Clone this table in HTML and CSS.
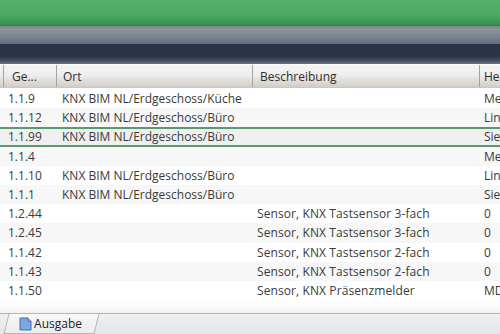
FILE: index.html
```html
<!DOCTYPE html>
<html>
<head>
<meta charset="utf-8">
<link rel="stylesheet" href="styles.css">
</head>
<body>
<div class="app">
  <div class="band-green"></div>
  <div class="band-gray"></div>
  <div class="band-navy"></div>
  <div class="grid">
    <div class="row head">
      <div class="c c0"></div>
      <div class="c c1">Ge...</div>
      <div class="c c2">Ort</div>
      <div class="c c3">Beschreibung</div>
      <div class="c c4">He</div>
    </div>
    <div class="body">
      <div class="row"><div class="c c0"></div><div class="c c1">1.1.9</div><div class="c c2">KNX BIM NL/Erdgeschoss/Küche</div><div class="c c3"></div><div class="c c4">Me</div></div>
      <div class="row alt"><div class="c c0"></div><div class="c c1">1.1.12</div><div class="c c2">KNX BIM NL/Erdgeschoss/Büro</div><div class="c c3"></div><div class="c c4">Lin</div></div>
      <div class="row sel"><div class="c c0"></div><div class="c c1">1.1.99</div><div class="c c2">KNX BIM NL/Erdgeschoss/Büro</div><div class="c c3"></div><div class="c c4">Sie</div></div>
      <div class="row alt"><div class="c c0"></div><div class="c c1">1.1.4</div><div class="c c2"></div><div class="c c3"></div><div class="c c4">Me</div></div>
      <div class="row"><div class="c c0"></div><div class="c c1">1.1.10</div><div class="c c2">KNX BIM NL/Erdgeschoss/Büro</div><div class="c c3"></div><div class="c c4">Lin</div></div>
      <div class="row alt"><div class="c c0"></div><div class="c c1">1.1.1</div><div class="c c2">KNX BIM NL/Erdgeschoss/Büro</div><div class="c c3"></div><div class="c c4">Sie</div></div>
      <div class="row"><div class="c c0"></div><div class="c c1">1.2.44</div><div class="c c2"></div><div class="c c3">Sensor, KNX Tastsensor 3-fach</div><div class="c c4">0</div></div>
      <div class="row alt"><div class="c c0"></div><div class="c c1">1.2.45</div><div class="c c2"></div><div class="c c3">Sensor, KNX Tastsensor 3-fach</div><div class="c c4">0</div></div>
      <div class="row"><div class="c c0"></div><div class="c c1">1.1.42</div><div class="c c2"></div><div class="c c3">Sensor, KNX Tastsensor 2-fach</div><div class="c c4">0</div></div>
      <div class="row alt"><div class="c c0"></div><div class="c c1">1.1.43</div><div class="c c2"></div><div class="c c3">Sensor, KNX Tastsensor 2-fach</div><div class="c c4">0</div></div>
      <div class="row"><div class="c c0"></div><div class="c c1">1.1.50</div><div class="c c2"></div><div class="c c3">Sensor, KNX Präsenzmelder</div><div class="c c4">MD</div></div>
    </div>
    <div class="filler"></div>
  </div>
  <div class="tabbar">
    <div class="tab">
      <svg class="ico" width="13" height="14" viewBox="0 0 13 14">
        <path d="M1 1h8l3 3v9H1z" fill="#7fa8dc" stroke="#3f6fb0" stroke-width="1"/>
        <path d="M9 1v3h3" fill="#c8dcf4" stroke="#3f6fb0" stroke-width="1"/>
      </svg>
      <span>Ausgabe</span>
    </div>
  </div>
</div>
</body>
</html>
```

FILE: styles.css
```css
html, body {
  margin: 0;
  padding: 0;
}
body {
  width: 500px;
  height: 334px;
  overflow: hidden;
  font-family: "Open Sans", "Noto Sans", sans-serif;
  font-size: 12px;
  color: #3a3a3a;
  background: #fff;
}
.app {
  display: flex;
  flex-direction: column;
  height: 334px;
}
.band-green {
  height: 26px;
  background: linear-gradient(#52b26a 0%, #4aa862 60%, #3c9152 92%, #2f7a44 100%);
}
.band-gray {
  height: 18px;
  background: linear-gradient(#7d838d 0%, #8e939c 20%, #7b8290 60%, #626d7e 100%);
}
.band-navy {
  height: 20px;
  background: linear-gradient(#2b3446 0%, #2a3346 60%, #46505f 85%, #6c7684 100%);
}
.grid {
  flex: 1;
  display: flex;
  flex-direction: column;
  background: #fff;
}
.row {
  display: flex;
  height: 19.2px;
  align-items: center;
  white-space: nowrap;
}
.row.alt {
  background: #f7f7f7;
}
.row.sel {
  background: #efefef;
  border-top: 2px solid #5a9870;
  border-bottom: 2px solid #5a9870;
  height: 15.2px;
}
.head {
  height: 22px;
  border-top: 1px solid #fafafa;
  background: linear-gradient(#f4f4f4 0%, #eeeeee 45%, #dcd8d4 80%, #d2cdc9 100%);
  border-bottom: 1px solid #c9c6c3;
  color: #2e2e2e;
  align-items: center;
}
.head .c {
  height: 100%;
  display: flex;
  align-items: center;
  border-right: 1px solid #a6a4a2;
}
.head .c4 { border-right: none; }
.body {
  padding-top: 1px;
}
.c {
  overflow: hidden;
  box-sizing: border-box;
}
.c0 { width: 4px; flex: none; }
.c1 { width: 53px; flex: none; padding-left: 4px; }
.c2 { width: 196px; flex: none; padding-left: 5px; }
.c3 { width: 227px; flex: none; padding-left: 4px; letter-spacing: 0.1px; }
.c4 { flex: 1; padding-left: 4px; }
.head .c1 { padding-left: 8px; }
.head .c2 { padding-left: 6px; }
.head .c3 { padding-left: 7px; letter-spacing: 0; }
.filler {
  flex: 1;
  background: linear-gradient(#fff 0%, #fbfbfb 50%, #f2f0ee 100%);
  border-bottom: 1px solid #b8b8b8;
}
.tabbar {
  height: 20px;
  background: linear-gradient(#eef0f2, #e4e7ea);
  display: flex;
  align-items: flex-start;
  padding-left: 4px;
}
.tab {
  height: 19px;
  display: flex;
  align-items: center;
  gap: 2px;
  padding: 0 14px 0 12px;
  background: linear-gradient(#f8f8f8, #ececec);
  border-left: 1px solid #b6b6b6;
  border-right: 1px solid #b6b6b6;
  border-bottom: 1px solid #b6b6b6;
  transform: skewX(-14deg);
  margin-left: 2px;
}
.tab > * {
  transform: skewX(14deg);
}
.tab span {
  color: #222;
  font-size: 12px;
}
.ico {
  display: block;
}
```
